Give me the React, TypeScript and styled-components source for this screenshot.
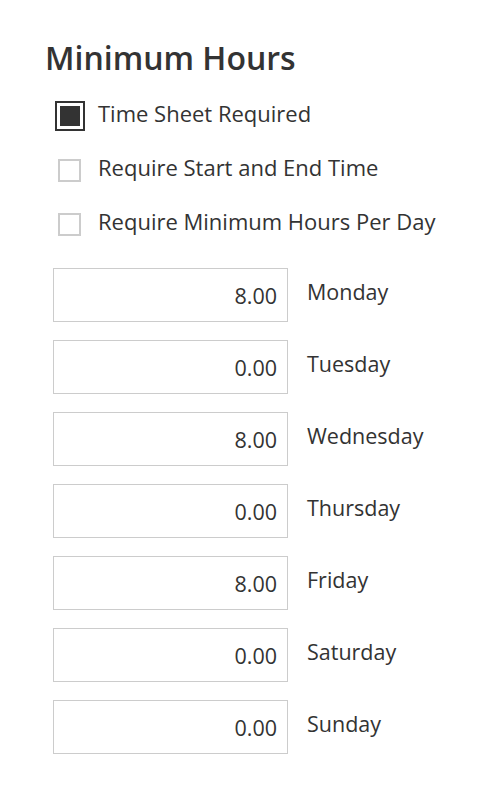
import React from "react";
import styled, { createGlobalStyle } from "styled-components";

const GlobalStyle = createGlobalStyle`
    body {
        margin: 0;
        background: #ffffff;
        font-family: "Open Sans", "Liberation Sans", sans-serif;
        color: #333333;
    }
`;

const options = [
    { label: "Time Sheet Required", checked: true },
    { label: "Require Start and End Time", checked: false },
    { label: "Require Minimum Hours Per Day", checked: false },
];

const days = [
    { day: "Monday", hours: "8.00" },
    { day: "Tuesday", hours: "0.00" },
    { day: "Wednesday", hours: "8.00" },
    { day: "Thursday", hours: "0.00" },
    { day: "Friday", hours: "8.00" },
    { day: "Saturday", hours: "0.00" },
    { day: "Sunday", hours: "0.00" },
];

const App = () => {
    return (
        <>
            <GlobalStyle />
            <Page>
                <Title>Minimum Hours</Title>
                <CheckList>
                    {options.map((opt) => (
                        <CheckRow key={opt.label}>
                            <BoxSlot>
                                <CheckBox checked={opt.checked}>
                                    {opt.checked && <CheckFill />}
                                </CheckBox>
                            </BoxSlot>
                            <CheckLabel>{opt.label}</CheckLabel>
                        </CheckRow>
                    ))}
                </CheckList>
                <DayList>
                    {days.map((d) => (
                        <DayRow key={d.day}>
                            <HoursInput defaultValue={d.hours} />
                            <DayLabel>{d.day}</DayLabel>
                        </DayRow>
                    ))}
                </DayList>
            </Page>
        </>
    );
};

const Page = styled.div`
    padding: 40px 0 24px 45px;
`;

const Title = styled.h2`
    margin: 0;
    font-size: 32px;
    line-height: 36px;
    font-weight: 600;
    color: #333333;
`;

const CheckList = styled.div`
    margin-top: 10px;
    padding-left: 10px;
    display: flex;
    flex-direction: column;
`;

const CheckRow = styled.div`
    height: 54px;
    display: flex;
    align-items: center;
    gap: 13px;
`;

const BoxSlot = styled.div`
    width: 30px;
    padding-top: 5px;
    display: flex;
    justify-content: center;
    align-items: center;
`;

const CheckBox = styled.div<{ checked: boolean }>`
    box-sizing: border-box;
    width: ${(p) => (p.checked ? "30px" : "23px")};
    height: ${(p) => (p.checked ? "30px" : "23px")};
    border: 2px solid ${(p) => (p.checked ? "#333333" : "#cccccc")};
    background: #ffffff;
    display: flex;
    justify-content: center;
    align-items: center;
    margin-right: ${(p) => (p.checked ? "0" : "2px")};
    margin-top: ${(p) => (p.checked ? "0" : "2px")};
`;

const CheckFill = styled.div`
    width: 20px;
    height: 20px;
    background: #333333;
`;

const CheckLabel = styled.span`
    font-size: 22px;
    line-height: 28px;
    color: #333333;
`;

const DayList = styled.div`
    margin-top: 20px;
    padding-left: 8px;
    display: flex;
    flex-direction: column;
    gap: 18px;
`;

const DayRow = styled.div`
    display: flex;
    align-items: center;
    gap: 19px;
`;

const HoursInput = styled.input`
    box-sizing: border-box;
    width: 235px;
    height: 54px;
    padding: 0 10px;
    border: 1px solid #cccccc;
    border-radius: 0;
    outline: none;
    background: #ffffff;
    font-family: "Open Sans", "Liberation Sans", sans-serif;
    font-size: 21.5px;
    color: #333333;
    text-align: right;
`;

const DayLabel = styled.span`
    padding-bottom: 6px;
    font-size: 21.5px;
    line-height: 28px;
    color: #333333;
`;

export default App;
